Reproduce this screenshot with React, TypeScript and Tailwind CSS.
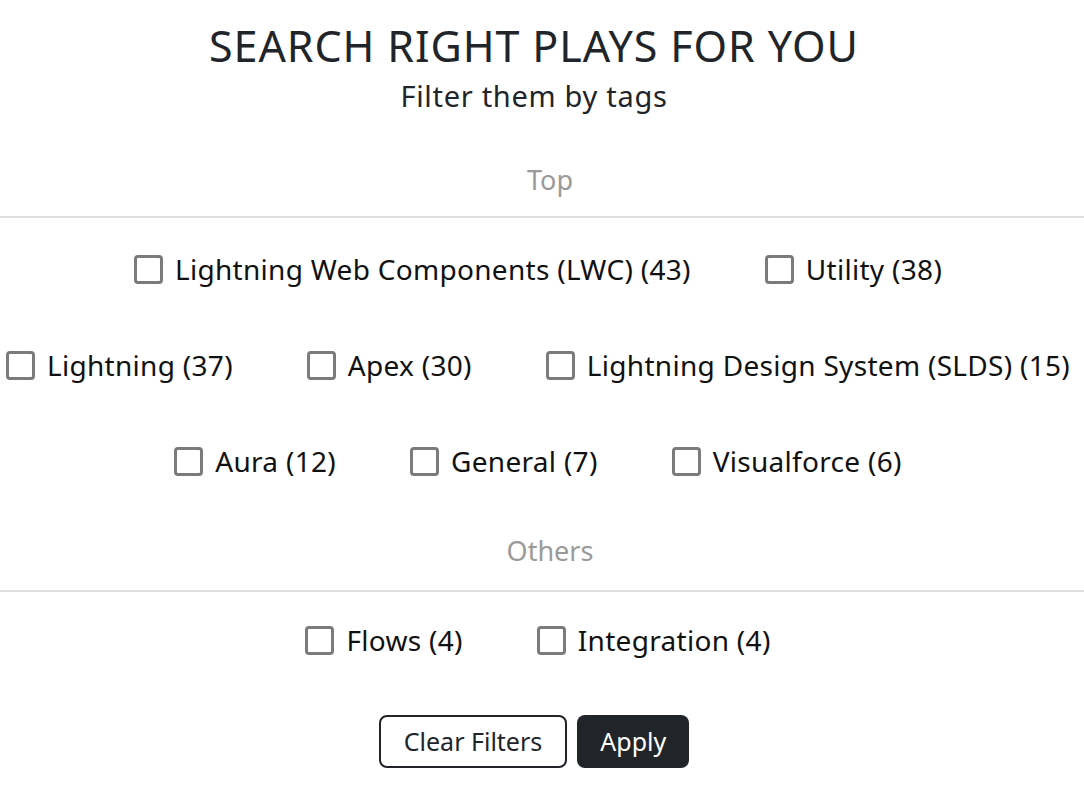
const topTags: { name: string; count: number }[][] = [
  [
    { name: 'Lightning Web Components (LWC)', count: 43 },
    { name: 'Utility', count: 38 },
  ],
  [
    { name: 'Lightning', count: 37 },
    { name: 'Apex', count: 30 },
    { name: 'Lightning Design System (SLDS)', count: 15 },
  ],
  [
    { name: 'Aura', count: 12 },
    { name: 'General', count: 7 },
    { name: 'Visualforce', count: 6 },
  ],
];

const otherTags = [
  { name: 'Flows', count: 4 },
  { name: 'Integration', count: 4 },
];

function Tag({ name, count }: { name: string; count: number }) {
  return (
    <label className="flex items-center gap-3 cursor-pointer">
      <input type="checkbox" className="peer sr-only" />
      <span className="w-[29px] h-[29px] rounded-[4px] border-[3px] border-[#7b7b7b] bg-white" />
      <span className="text-[28px] tracking-[0.3px] text-[#111]">
        {name} ({count})
      </span>
    </label>
  );
}

function Section({ title }: { title: string }) {
  return (
    <div className="pl-[16px] text-center text-[27px] leading-[36px] text-[#9a9a9a]">{title}</div>
  );
}

export default function App() {
  return (
    <div className="w-full bg-white text-[#212529]" style={{ fontFamily: '"Noto Sans", sans-serif' }}>
      <div className="pt-[18px] pr-[16px] text-center">
        <h1 className="text-[43px] leading-[56px] tracking-[0.9px]">SEARCH RIGHT PLAYS FOR YOU</h1>
        <p className="text-[29px] leading-[40px] mt-[2px] tracking-[0.7px]">Filter them by tags</p>
      </div>

      <div className="mt-[46px]">
        <Section title="Top" />
        <div className="mt-[18px] border-t-2 border-[#dedede]" />
        <div className="flex flex-col items-center gap-[60px] mt-[33px] pr-[8px]">
          {topTags.map((row, i) => (
            <div key={i} className="flex justify-center gap-[74px] h-[36px] items-center">
              {row.map(t => (
                <Tag key={t.name} {...t} />
              ))}
            </div>
          ))}
        </div>
      </div>

      <div className="mt-[54px]">
        <Section title="Others" />
        <div className="mt-[21px] border-t-2 border-[#dedede]" />
        <div className="flex justify-center gap-[74px] h-[36px] items-center mt-[30px] pr-[8px]">
          {otherTags.map(t => (
            <Tag key={t.name} {...t} />
          ))}
        </div>
      </div>

      <div className="flex justify-center gap-[10px] mt-[57px] pb-[23px] pr-[16px]">
        <button className="h-[53px] px-[23px] rounded-[8px] border-2 border-[#212529] bg-white text-[25px] text-[#212529]">
          Clear Filters
        </button>
        <button className="h-[53px] px-[23px] rounded-[8px] bg-[#212529] text-[25px] text-white">
          Apply
        </button>
      </div>
    </div>
  );
}
